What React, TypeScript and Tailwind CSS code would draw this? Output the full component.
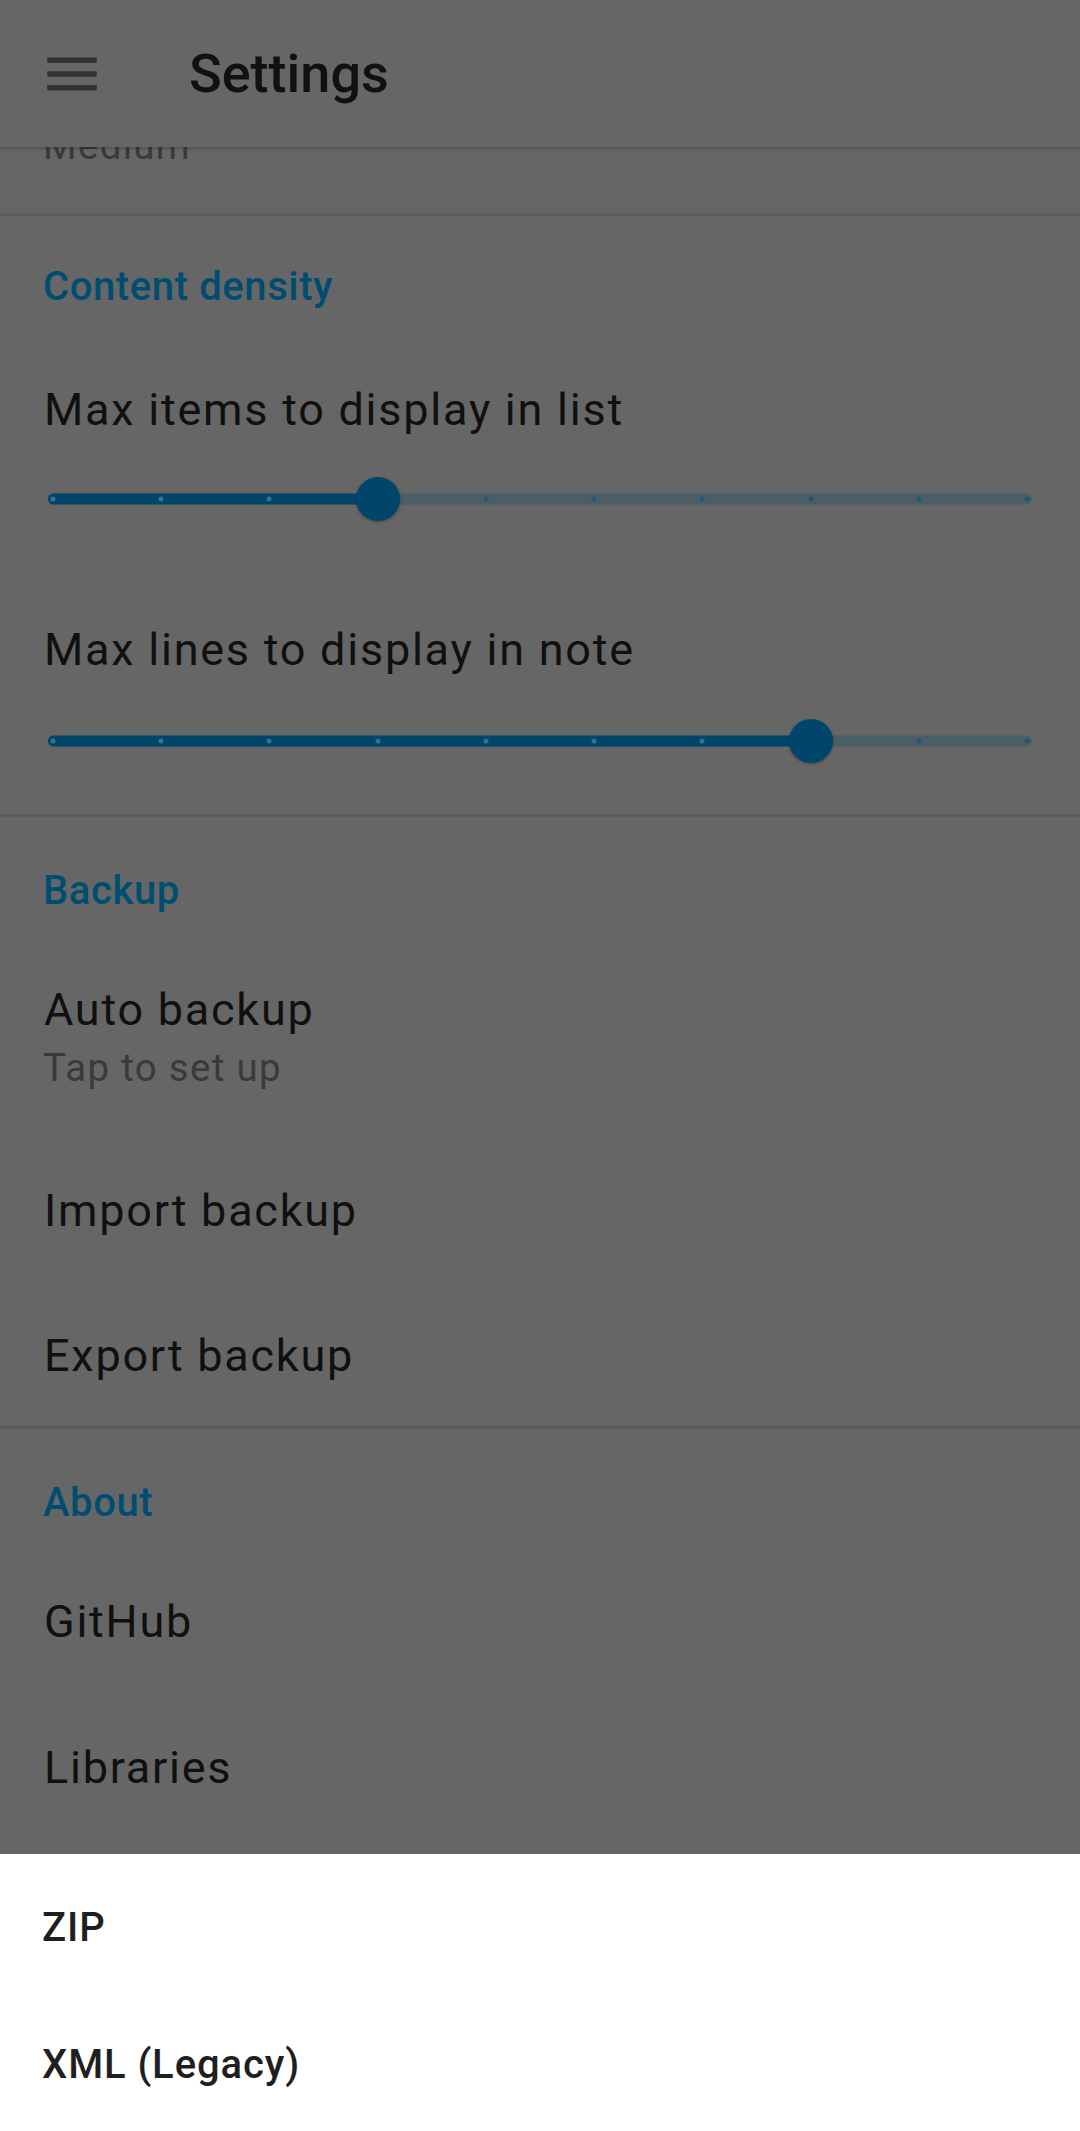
import React from "react";

type SliderProps = {
  value: number;
  max: number;
};

const Slider: React.FC<SliderProps> = ({ value, max }) => {
  const pct = value / max;
  const ticks = Array.from({ length: max + 1 }, (_, i) => i);
  return (
    <div className="relative h-[44px] mx-[48px]">
      <div className="absolute inset-x-0 top-1/2 -translate-y-1/2 h-[11px] rounded-full bg-[#4b5d66]" />
      <div
        className="absolute left-0 top-1/2 -translate-y-1/2 h-[11px] rounded-full bg-[#00456a]"
        style={{ width: `calc(5px + ${pct} * (100% - 10px))` }}
      />
      <div className="absolute inset-y-0 left-[5px] right-[5px]">
        {ticks.map((i) => (
          <span
            key={i}
            className={
              "absolute top-1/2 w-[5px] h-[5px] rounded-full -translate-x-1/2 -translate-y-1/2 " +
              (i <= value ? "bg-[#3f6f86]" : "bg-[#1d5877]")
            }
            style={{ left: `${(i / max) * 100}%` }}
          />
        ))}
        <span
          className="absolute top-0 w-[44px] h-[44px] rounded-full -translate-x-1/2 bg-[#00456a] shadow-[0_1px_3px_rgba(0,0,0,0.35)]"
          style={{ left: `${pct * 100}%` }}
        />
      </div>
    </div>
  );
};

const Divider = () => <div className="h-[3px] bg-[#5c5c5c]" />;

const Header = ({ title, className }: { title: string; className?: string }) => (
  <div className={"pl-[43px] text-[40px] leading-none font-medium tracking-[0.6px] text-[#004d72] " + (className ?? "pt-[51px]")}>
    {title}
  </div>
);

const Title = ({ text, className }: { text: string; className?: string }) => (
  <div className={"pl-[44px] text-[45px] leading-none tracking-[1.75px] text-[#101010] " + (className ?? "")}>
    {text}
  </div>
);

export default function App() {
  return (
    <div className="w-[1080px] h-[2131px] overflow-hidden bg-[#666666] font-[Roboto,sans-serif] flex flex-col">
      {/* app bar */}
      <div className="relative z-10 h-[147px] shrink-0 flex items-center bg-[#666666] shadow-[0_2px_3px_rgba(0,0,0,0.18)]">
        <svg className="ml-[39px] w-[66px] h-[66px]" viewBox="0 0 24 24" fill="#333333">
          <path d="M3 18h18v-2H3v2zm0-5h18v-2H3v2zm0-7v2h18V6H3z" />
        </svg>
        <div className="ml-[84px] text-[54px] leading-none font-medium text-[#111111]">Settings</div>
      </div>

      {/* scrolled content */}
      <div className="h-[66px] shrink-0 overflow-hidden">
        <div className="-mt-[20px] pl-[43px] text-[38.5px] leading-none tracking-[1.3px] text-[#3a3a3a]">Medium</div>
      </div>
      <Divider />

      <Header title="Content density" />
      <Title text="Max items to display in list" className="mt-[80px]" />
      <div className="mt-[45px]">
        <Slider value={3} max={9} />
      </div>
      <Title text="Max lines to display in note" className="mt-[106px]" />
      <div className="mt-[47px]">
        <Slider value={7} max={9} />
      </div>
      <div className="mt-[51px]">
        <Divider />
      </div>

      <Header title="Backup" className="pt-[54px]" />
      <Title text="Auto backup" className="mt-[76px]" />
      <div className="mt-[17px] pl-[43px] text-[38.5px] leading-none tracking-[1.3px] text-[#3a3a3a]">Tap to set up</div>
      <Title text="Import backup" className="mt-[100px]" />
      <Title text="Export backup" className="mt-[100px]" />
      <div className="mt-[48px]">
        <Divider />
      </div>

      <Header title="About" className="pt-[54px]" />
      <Title text="GitHub" className="mt-[76px]" />
      <Title text="Libraries" className="mt-[101px]" />

      {/* bottom sheet */}
      <div className="mt-auto h-[277px] shrink-0 bg-white">
        <div className="pt-[54px] pl-[42px] text-[40px] leading-none font-medium tracking-[0.9px] text-[#1f1f1f]">ZIP</div>
        <div className="mt-[97px] pl-[42px] text-[40px] leading-none font-medium tracking-[0.9px] text-[#1f1f1f]">XML (Legacy)</div>
      </div>
    </div>
  );
}
